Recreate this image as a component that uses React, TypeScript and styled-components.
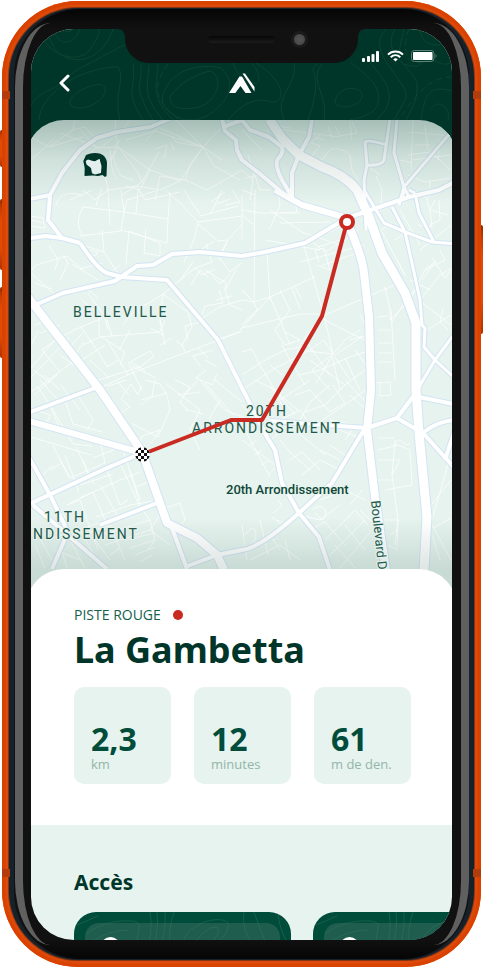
import React from "react";
import styled, { createGlobalStyle } from "styled-components";

const color = {
  forest: "#003629",
  pine: "#004d3b",
  panel: "#205e4f",
  mint: "#e6f3ee",
  red: "#c92a22",
  sage: "#94b5aa",
};

const GlobalStyle = createGlobalStyle`
  *, *::before, *::after { box-sizing: border-box; }
  body {
    margin: 0;
    background: #fff;
    font-family: "Noto Sans", "Open Sans", sans-serif;
    color: ${color.forest};
  }
  h1, h2, p, dl, dd, dt, ul { margin: 0; padding: 0; }
`;

/* ---------- device ---------- */

const Stage = styled.div`
  display: flex;
  height: 100vh;
  min-height: 600px;
  padding: 1px 3px 1px 2px;
  isolation: isolate;
`;

const Phone = styled.div`
  position: relative;
  flex: 1;
  min-width: 0;
  display: flex;
  padding: 7px;
  border-radius: 76px;
  background: #e2500f;
  box-shadow: inset 0 0 2px 4px #da4200;
`;

const SideKey = styled.span<{ $side: "left" | "right"; $top: number; $size: number }>`
  position: absolute;
  z-index: -1;
  ${(p) => p.$side}: -2px;
  top: ${(p) => p.$top}px;
  width: 6px;
  height: ${(p) => p.$size}px;
  border-radius: 2px;
  background: linear-gradient(#8c2c00, #c43c02 12%, #e04a06 30%, #e04a06 70%, #a83402);
`;

const AntennaBand = styled.span<{ $side: "left" | "right"; $edge: "top" | "bottom" }>`
  position: absolute;
  ${(p) => p.$side}: 0;
  ${(p) => p.$edge}: 90px;
  width: 8px;
  height: 8px;
  background: #b33c0c;
`;

const Rim = styled.div`
  flex: 1;
  min-width: 0;
  display: flex;
  padding: 1px 5px;
  border-radius: 69px;
  background: #16222b;
  box-shadow: 0 0 1px 1px rgba(60, 30, 20, 0.6);
`;

const Bezel = styled.div`
  position: relative;
  flex: 1;
  min-width: 0;
  display: flex;
  padding: 20px 17px 19px;
  border-radius: 66px;
  background: linear-gradient(#050505, #111 20px, #111 calc(100% - 20px), #050505);

  &::before {
    content: "";
    position: absolute;
    inset: 14px 0 14px 1px;
    border: 0 solid #606060;
    border-width: 0 8px;
    border-radius: 36px / 64px;
  }
`;

const Screen = styled.div`
  position: relative;
  flex: 1;
  min-width: 0;
  overflow: hidden;
  border-radius: 43px;
  background: ${color.mint};
  isolation: isolate;
`;

const NotchArea = styled.div`
  position: absolute;
  z-index: 3;
  inset: 0 0 auto;
  display: flex;
  justify-content: center;
`;

const Notch = styled.div`
  position: relative;
  width: 233px;
  height: 34px;
  border-radius: 0 0 24px 24px;
  background: #111;

  &::before,
  &::after {
    content: "";
    position: absolute;
    top: 0;
    width: 6px;
    height: 6px;
  }
  &::before {
    right: 100%;
    background: radial-gradient(circle at 0 100%, transparent 5px, #111 6px);
  }
  &::after {
    left: 100%;
    background: radial-gradient(circle at 100% 100%, transparent 5px, #111 6px);
  }
`;

const Speaker = styled.span`
  position: absolute;
  left: 83px;
  top: 7px;
  width: 67px;
  height: 7px;
  border-radius: 4px;
  background: linear-gradient(#060606, #1c1c1c);
`;

const Camera = styled.span`
  position: absolute;
  left: 166px;
  top: 2px;
  width: 17px;
  height: 17px;
  border: 3px solid #1b1b1b;
  border-radius: 50%;
  background: radial-gradient(circle, #555, #444);
`;

/* ---------- header ---------- */

const Header = styled.header`
  position: relative;
  height: 131px;
  margin-bottom: -40px;
  background: ${color.forest};
`;

const Contours = styled.svg`
  position: absolute;
  inset: 0;
  width: 100%;
  height: 100%;
  fill: none;
  stroke: #0d4434;
  stroke-width: 1;
`;

const StatusBar = styled.div`
  position: relative;
  display: flex;
  justify-content: flex-end;
  align-items: center;
  gap: 7px;
  height: 40px;
  padding: 14px 14px 0 0;
`;

const NavBar = styled.nav`
  position: relative;
  display: grid;
  grid-template-columns: 1fr auto 1fr;
  align-items: center;
  height: 28px;
  padding: 0 24px;
`;

const BackButton = styled.button`
  justify-self: start;
  display: flex;
  padding: 4px;
  border: 0;
  background: none;
  color: #fff;
`;

/* ---------- map ---------- */

const MapPanel = styled.section`
  position: relative;
  height: 490px;
  margin: 0 -5px -41px;
  border-radius: 38px 38px 0 0;
  overflow: hidden;
  background: ${color.mint};
`;

const MapDrawing = styled.svg`
  display: block;
  width: 100%;
  height: 100%;
`;

const MapShade = styled.div`
  position: absolute;
  inset: 0;
  background:
    linear-gradient(rgba(0, 54, 41, 0.28), rgba(0, 54, 41, 0.1) 38px, rgba(0, 54, 41, 0) 84px),
    linear-gradient(to top, rgba(0, 54, 41, 0.13) 41px, rgba(0, 54, 41, 0) 92px);
`;

const MapOverlay = styled(MapDrawing)`
  position: absolute;
  inset: 0;
`;

/* ---------- details ---------- */

const Summary = styled.section`
  position: relative;
  height: 256px;
  margin: 0 -5px;
  padding: 34px 46px 0 48px;
  border-radius: 38px 38px 0 0;
  background: #fff;
`;

const Grade = styled.p`
  display: flex;
  align-items: center;
  gap: 12px;
  font-family: "Open Sans", "Noto Sans", sans-serif;
  font-size: 14px;
  line-height: 24px;
  color: #16614c;

  &::after {
    content: "";
    width: 10px;
    height: 10px;
    border-radius: 50%;
    background: ${color.red};
  }
`;

const Title = styled.h1`
  font-size: 36px;
  line-height: 46px;
  font-weight: 700;
`;

const Stats = styled.dl`
  display: grid;
  grid-template-columns: repeat(3, 1fr);
  gap: 23px;
  margin-top: 14px;
`;

const Stat = styled.div`
  display: flex;
  flex-direction: column-reverse;
  height: 97px;
  padding: 0 0 11px 17px;
  border-radius: 10px;
  background: ${color.mint};
`;

const StatValue = styled.dd`
  font-size: 32px;
  line-height: 32px;
  font-weight: 700;
  color: ${color.pine};
`;

const StatUnit = styled.dt`
  font-family: "Open Sans", "Noto Sans", sans-serif;
  font-size: 13px;
  line-height: 18px;
  white-space: nowrap;
  color: ${color.sage};
`;

const Access = styled.section`
  padding: 43px 0 0 43px;
`;

const SectionTitle = styled.h2`
  font-size: 21px;
  line-height: 28px;
  font-weight: 700;
`;

const AccessList = styled.ul`
  display: flex;
  gap: 22px;
  margin-top: 16px;
  list-style: none;
`;

const AccessCard = styled.li`
  position: relative;
  flex: 0 0 217px;
  height: 120px;
  padding: 11px;
  overflow: hidden;
  border-radius: 22px;
  background: ${color.pine};
`;

const AccessInner = styled.div`
  height: 98px;
  padding: 14px 16px;
  border-radius: 14px;
  background: ${color.panel};
`;

const AccessBadge = styled.span`
  display: block;
  width: 19px;
  height: 19px;
  border-radius: 50%;
  background: #fff;
`;

const CardContours = styled(Contours)`
  stroke: #3b7767;
  opacity: 0.4;
`;

/* ---------- map data ---------- */

const streets = `
M31 137L49 147L73 130L75 120M49 147L83 137M31 160L54 139M60 133L100 148L120 133L130 120M115 120L118 148L104 170L108 190
M72 130L85 127L93 136M84 158L96 148L118 147L150 170L180 181L203 147M118 147L138 172L142 182L159 152M142 182L122 195
M110 150C112 160 110 170 117 180M120 140C112 150 111 160 121 176L133 180M150 170L140 190L126 186
M80 130L96 147M126 140L155 131L203 147L222 160M145 141L165 120M160 128L203 147L220 129M176 120L203 147L176 142L172 137M155 149L167 145L164 158M174 150L171 142
M203 147L190 165L185 180L207 190M203 147L214 166L240 180M185 180L160 176L155 200M207 190L242 170L253 180
M83 190L95 200L108 190L137 186L160 190L180 181M108 190L110 225M137 186L145 200L180 192M56 205C58 195 70 190 83 196
M70 200L92 190M83 207L124 212L121 231L80 236M83 207C76 220 78 229 83 236M124 212L168 219L167 243L121 230M121 190L124 212M124 212L127 200L155 191M168 219L170 192
M96 205L102 188M138 190L136 214M102 230L104 252L121 278M104 252L83 245M129 231L126 265M129 231L160 243L160 256L144 253L146 229M109 274L120 265
M198 222L242 216M198 222L195 237L184 262M198 222L180 203L165 190M184 190L192 203L200 214M211 213L222 190M200 216L238 206M198 224L218 241L228 240L242 224M228 240L220 254M214 241L198 252
M211 202L225 192M217 204L230 199M225 205L240 202L232 190
M31 271L36 265L67 256L83 270M49 245L58 260L55 270M60 280L68 263L63 255M31 273L53 293M72 264L98 280M31 216L43 218L45 228L31 226M31 220L44 223M80 269L102 263
M35 283L52 289M90 250L98 252L95 256L88 252M163 294L195 268L212 262L206 243M195 268L202 275L215 269M163 294L147 304L135 310L123 325M163 294L160 320L165 345
M163 294L188 312L192 327L182 345L186 353M201 322L185 326L188 340M217 340L242 331M200 320L219 307L242 300M205 270L226 283L225 290M180 280L193 262M191 285L200 270L208 277
M220 258L230 272L242 263M219 260L227 242M212 276L220 284L230 275M205 306L223 303L219 290M205 306L200 320M216 300L232 296M236 270L225 290L230 305L242 310
M88 293L105 317L108 330M105 317L81 327L99 353L107 367L118 360M82 300L92 309M85 287L99 299M99 313L99 335L125 352L120 365M83 326L58 338L42 350L60 372
M83 345L100 337L160 332L165 320M112 336L107 320M75 355L84 342M67 350L83 333M77 363L105 345M40 333L60 325M35 325L52 319M90 360L109 378M128 375L107 340
M31 345L39 330M31 368L55 340M31 377L69 338M38 388L78 358M44 375L60 390M34 370L50 383M61 340L76 356M34 395L57 375M60 355L75 366
M95 381L140 367L154 356L150 351L130 362L145 370M128 362L142 390M119 350L130 330M132 366L156 378M100 388L132 373L242 331M182 345L176 341M201 367L193 356L213 350M206 370L196 378L212 385L217 374M205 360L217 367M198 348L208 358M160 320L163 335L150 328M160 345L172 338
M31 437L91 455M65 400L73 424L102 432M50 405L73 444L92 446M31 392L38 387L50 405L61 432M77 394L93 420L87 430M40 380L58 400L75 393M61 385L80 410M44 430L50 415L36 410
M117 381L129 395M127 380L108 386M121 399L131 384L138 395L142 385M114 400L108 410M120 413L130 407L121 399M131 423L158 437L170 410L167 395L160 384L145 380M150 444L160 430L142 436L139 444
M165 383L200 410L190 430L200 450M175 380L190 387L180 402L188 411M183 397L198 380M200 380L225 410L250 420M205 383L233 415M215 380L242 402M203 414L185 409M220 400L209 419M141 400L167 393M155 380L152 396L141 405M178 395L200 392
M60 460L70 478M53 446L70 478M70 478L105 463L100 440M79 492L65 455M94 484L76 447M52 498L67 520M67 505L80 500L98 550M100 485L120 520M70 503L93 492L107 525M80 498L120 480L140 472M107 470L120 505L128 500M121 465L139 505L150 520
M130 470L140 500M80 485L113 474M93 458L108 452L122 447M83 460L88 475M122 447L135 487L157 479L145 458M135 487L140 505M96 517L130 505L160 500M50 470L62 463M43 475L53 465M100 440L125 450
M35 530L52 560M45 540L80 530L100 522M80 530L98 562M85 540L150 520L155 540L148 550M90 532L110 525L125 560M105 545L150 530M125 540L155 533M130 548L155 540M135 555L155 547M140 562L152 555M110 555L120 548M160 510L180 503L185 520L175 530L168 522M160 515L150 530L170 545M55 550L80 560M60 545L67 568M70 540L85 568M35 545L45 568M95 540L110 560
M242 240L242 195M255 190L254 300M267 250L270 300M242 300L254 302L270 297L315 277M254 302L242 290M254 302L257 310L242 325M270 297L280 320L290 345M270 297L240 330M254 225L242 215M242 210L260 213L300 213M269 230L280 205L278 190M280 223L330 222M281 213L297 212L293 190M265 240L320 250M304 246L325 320M270 210L302 232L340 245M319 262L315 250L324 248L330 270L317 265M318 247L340 240M347 222L330 232L318 232M310 240L325 252L345 240L358 230M300 262L365 245M323 265L360 252
M242 328L300 314L322 314M292 288L300 309M295 287L302 300M280 290L290 310L275 330L285 345L300 340L285 332M242 352L252 349L260 365L275 390M322 314L300 345L290 375M322 314L305 340L330 375M325 320L333 354L324 340L310 350M325 320L350 333L365 340M320 317L395 285L405 281M385 287L390 310L390 320L410 300L425 270L435 262M392 322L405 302L418 285M391 310L395 380M378 317L388 316M378 330L390 330M378 343L391 343M378 353L392 353M378 362L392 362
M242 375L265 360L285 350L310 345M245 388L272 370L310 350M282 345L290 360L305 385M299 350L333 354L345 340L360 330M270 365L282 375M333 354L350 380M333 354L312 370L330 390M335 355L362 337M315 385L332 356L340 390M300 375L320 370L350 357L365 352M310 360L345 385L365 370M360 315L368 330M350 340L368 335M355 350L368 368M345 358L360 390
M400 210L420 245M382 232L405 275L397 260M392 222L375 235M395 240L410 230M418 225L432 227L430 210L435 200M425 195L430 210L448 215M439 200L440 220L430 225M420 250L451 225M422 303L451 325M420 300L440 275L451 268M432 257L445 278L451 270M435 262L422 280M425 270L445 260L440 250M422 333L440 322L451 315M440 322L443 308M440 322L448 330M410 280L430 290
M242 405L260 425M255 380L275 390L295 415M270 385L285 410M285 380L280 395L298 410M295 395L310 390L330 412L345 403L333 385M300 420L310 402L330 385M305 412L325 405L345 385M315 425L345 405L365 390M280 400L310 380M260 430L300 410L310 425M270 440L290 425M330 420L355 425L345 440M350 395L366 410M375 383L390 382L391 395L378 396M380 396L380 382M345 380L366 402M340 430L365 440
M242 440L275 465M245 430L270 477M250 445L257 440M255 455L262 450M262 465L269 460M268 475L275 468M280 440L290 452L310 470M290 460L302 452L320 470M295 430L325 455M302 475L320 460L340 470M320 450L340 460M330 445L345 455
M378 450L398 445L410 450L412 485L385 490M378 438L395 438M378 460L400 460L392 475M395 440L392 475L398 520L395 545M395 445C400 432 405 450 410 443M378 480L392 480M385 520L398 520L397 550L388 545M390 535L397 530M425 513L451 480M431 523L445 475L451 450M433 528L451 518M431 523L451 560M425 513L440 560
M273 513L282 505L278 500M277 520L290 525M272 517L283 526L275 530M312 510C325 500 330 515 322 520L315 513M300 515L320 520L340 505M310 530L325 522L345 545M325 540L355 510L368 525M330 555L365 520M340 568L372 530M320 500L345 490L365 500M345 525L365 550M335 545L355 568M360 510L380 530M362 490L350 505M242 525L247 560M245 535C255 520 260 535 252 545M260 520L268 555M250 560L280 545L300 560M285 540L290 560M268 532L280 550
M242 130L262 150M270 128L340 137M335 126L340 136L357 133L352 122M270 125L290 128M315 138L325 140M312 143L320 146L310 158M325 157C330 143 345 150 350 155L352 170L358 180M325 157L315 165M300 152L320 135M328 126L332 138M350 122L352 140
M408 132L451 136M413 120L411 170M408 155L430 152L440 160M412 160L450 155M425 125L428 150M430 150L450 170M415 145L430 145M440 140L438 160M408 175L425 182L450 178M430 180L428 200M400 160L412 163
M242 190L255 195M248 155L260 190L270 190M245 178L260 175M255 165L250 200M376 176L382 190L380 215M366 165L380 175`;

const roads = [
  { w: 4, d: "M25 200L50 195L62 173L80 150L97 138L117 132L150 127L170 119M50 196L48 220L62 238M25 239L45 236L62 238L80 243M31 308L35 305L63 293L115 281L137 266L153 265L172 254L200 252L242 256L265 252L305 243L347 218L409 197L439 190L458 180" },
  { w: 4, d: "M80 243Q98 270 107 273L122 277L167 280L218 340L242 388L267 437L275 450L282 483L299 513L319 537L330 570" },
  { w: 4, d: "M222 119L225 131L236 140L237 150L242 160L259 173L285 195M223 127L242 120L250 130L269 137L282 147Q284 152 278 159Q274 164 282 180L292 197M312 119L309 137L299 155L292 173L292 197" },
  { w: 3, d: "M390 119L384 160Q382 166 367 165M366 230L364 180L367 165L365 142Q367 139 387 145M397 119L394 153L404 187L399 205M404 187L458 124M404 187L409 197M404 190L402 200" },
  { w: 3, d: "M364 190L384 223L405 232L432 242L458 244M392 207L405 232L412 263L420 300L422 325L425 328L424 347L435 360L458 381M415 193L419 213L434 242M409 190L415 193M458 329L435 360L419 387" },
  { w: 4, d: "M25 414L95 388M25 506L107 468L142 453M25 450L50 495L68 532L52 569M33 505L107 569M100 525L157 503M172 528L187 569M185 567L217 555L242 550Q260 548 299 513L332 483L365 428" },
  { w: 4, d: "M270 421L367 428L397 418L424 434L458 472M397 418L418 390M419 397L458 405M424 432Q440 420 458 420M458 420L445 460" },
  { w: 6, d: "M25 420L142 453M275 190L302 205L347 218" },
  { w: 8, d: "M25 293L47 322L100 390L142 452L167 523L197 538L217 555L224 570M347 222Q362 255 364 273L369 317L371 390L367 430L375 497L386 570" },
  { w: 9, d: "M269 119L282 138L299 155L322 167Q345 175 357 190L369 217L382 253L405 293L416 323L416 390L419 433L427 517L424 570" },
];

const routePath = "M143 454L231 420L262 420L322 316L347 222";

const PlaceLabel = styled.text`
  font-family: Roboto, "Noto Sans", sans-serif;
  font-size: 14px;
  letter-spacing: 2px;
  fill: #23584a;
  stroke: ${color.mint};
  stroke-width: 2px;
  paint-order: stroke;
`;

const DistrictLabel = styled(PlaceLabel)`
  font-size: 13px;
  font-weight: 500;
  letter-spacing: 0;
  fill: #0f4838;
`;

const RoadLabel = styled(PlaceLabel)`
  font-size: 13px;
  letter-spacing: 0;
`;

const checks = [0, 1, 2, 3, 4].flatMap((r) =>
  [0, 1, 2, 3, 4].filter((c) => (r + c) % 2 === 1).map((c) => ({ x: 135 + c * 3, y: 447 + r * 3 }))
);

function TrailMap() {
  return (
    <MapPanel aria-label="Plan de la piste">
      <MapDrawing viewBox="26 120 431 490" preserveAspectRatio="xMidYMin slice" aria-hidden="true">
        <g fill="none" strokeLinejoin="round">
          <path d={streets} stroke="#fff" strokeWidth="1" opacity="0.75" />
          {roads.map((r) => (
            <path key={r.d} d={r.d} stroke="#d3e4f3" strokeWidth={r.w + 2} />
          ))}
          {roads.map((r) => (
            <path key={r.d} d={r.d} stroke="#fff" strokeWidth={r.w} />
          ))}
        </g>
      </MapDrawing>
      <MapShade />
      <MapOverlay viewBox="26 120 431 490" preserveAspectRatio="xMidYMin slice">
        <PlaceLabel x="73" y="317">BELLEVILLE</PlaceLabel>
        <PlaceLabel x="246" y="416">20TH</PlaceLabel>
        <PlaceLabel x="192" y="433">ARRONDISSEMENT</PlaceLabel>
        <PlaceLabel x="44" y="522">11TH</PlaceLabel>
        <PlaceLabel x="33" y="539">NDISSEMENT</PlaceLabel>
        <DistrictLabel x="226" y="494">20th Arrondissement</DistrictLabel>
        <RoadLabel transform="translate(371 501) rotate(84)">Boulevard Davout</RoadLabel>
        <path d={routePath} fill="none" stroke={color.red} strokeWidth="4" strokeLinejoin="round" />
        <circle cx="347" cy="222" r="6" fill="#fff" stroke={color.red} strokeWidth="4" />
        <clipPath id="finish"><circle cx="142.500" cy="454.500" r="7.300" /></clipPath>
        <g clipPath="url(#finish)">
          <rect x="134" y="446" width="17" height="17" fill="#fff" />
          {checks.map((c) => (
            <rect key={`${c.x}-${c.y}`} x={c.x} y={c.y} width="3" height="3" fill="#111" />
          ))}
        </g>
        <path
          fill={color.forest}
          d="M83.300 161L86 155Q90 153 95 153Q101 153 104 156Q107 159 107 164L106.500 176L105 177L102.500 175L98 176L93 175.500L84.500 176L84.700 168Z"
        />
        <path
          fill="#e3efec"
          d="M85.700 161L88 159.500L93 161L95 161.200L99.500 158.700L101.500 166L101 173L95 174.500L92 173.300L91 168L86.500 164.500Z"
        />
      </MapOverlay>
    </MapPanel>
  );
}

const headerContours =
  "M9 0C13 25 45 36 58 22Q70 5 68 0M23 0C25 17 43 18 49 0M33 0Q36 6 42 0M17 3C25 42 70 39 82 0" +
  "M0 76C15 56 17 68 43 43C55 36 72 27 95 15M8 91C8 75 29 52 58 43Q78 37 87 38C95 48 82 66 89 91" +
  "M40 77C33 66 63 53 71 56C84 64 56 86 40 77M102 35C106 60 92 60 112 91M110 35C112 58 100 54 122 91M118 36C116 60 112 67 132 91M127 35C126 55 119 71 143 91" +
  "M139 68C147 54 169 43 180 42C197 53 180 79 162 79Q139 82 139 68M132 66C139 40 170 34 190 39C209 56 194 76 174 88Q154 97 137 82Q129 74 132 66" +
  "M202 35C225 20 236 60 221 54Q208 49 202 35M225 34C258 55 253 75 240 73Q219 65 197 91M253 91C242 66 268 55 263 34M277 91C295 40 274 43 286 35" +
  "M291 35C277 52 298 66 293 91M304 73C308 53 334 58 331 68C328 79 306 81 304 73" +
  "M319 33C337 46 351 59 347 73C346 84 331 89 319 91M333 25C350 49 365 59 355 80L346 91M355 0C332 24 379 52 375 69C370 79 365 87 363 91" +
  "M364 0C348 26 385 39 386 56Q388 69 375 91M389 0C390 17 405 18 416 14M407 0Q410 11 420 3" +
  "M390 91C394 60 402 57 421 62M400 80C407 68 421 80 417 91M373 0C369 22 359 38 387 37C403 21 410 43 421 32";
const dashedContours = "M137 35C119 60 125 72 149 91M378 0C370 20 374 45 404 28M421 48C390 47 375 86 366 91";

const cardContours =
  "M13 22C27 7 70 5 65 15L62 36M17 30Q35 18 55 18M3 13L24 4M76 0Q79 17 74 36M83 0Q85 18 79 36M91 0Q92 16 87 36M100 0Q94 17 96 36M110 28C114 12 146 2 154 11C156 24 142 31 130 36M122 29Q133 14 143 15Q149 22 133 33M170 0Q167 16 180 36M180 0Q187 20 194 36M204 0Q205 16 213 30";

const stats = [
  { value: "2,3", unit: "km" },
  { value: "12", unit: "minutes" },
  { value: "61", unit: "m de den." },
];

export default function App() {
  return (
    <>
      <GlobalStyle />
      <Stage>
        <Phone>
          <SideKey $side="left" $top={129} $size={37} />
          <SideKey $side="left" $top={198} $size={71} />
          <SideKey $side="left" $top={286} $size={71} />
          <SideKey $side="right" $top={224} $size={109} />
          <AntennaBand $side="left" $edge="top" />
          <AntennaBand $side="right" $edge="top" />
          <AntennaBand $side="left" $edge="bottom" />
          <AntennaBand $side="right" $edge="bottom" />
          <Rim>
            <Bezel>
              <Screen>
                <NotchArea>
                  <Notch>
                    <Speaker />
                    <Camera />
                  </Notch>
                </NotchArea>

                <Header>
                  <Contours viewBox="0 0 421 131" preserveAspectRatio="xMidYMin slice" aria-hidden="true">
                    <path d={headerContours} />
                    <path d={dashedContours} strokeDasharray="6 4" />
                  </Contours>
                  <StatusBar>
                    <svg width="18" height="11" viewBox="0 0 18 11" fill="#fff" aria-hidden="true">
                      <rect x="0" y="7" width="3" height="4" rx="1" />
                      <rect x="5" y="5" width="3" height="6" rx="1" />
                      <rect x="9.500" y="3" width="3" height="8" rx="1" />
                      <rect x="14" y="0" width="3" height="11" rx="1" />
                    </svg>
                    <svg width="17" height="12" viewBox="0 0 17 12" fill="none" stroke="#fff" strokeWidth="2" aria-hidden="true">
                      <path d="M1 4.600C5 .400 12 .400 16 4.600M3.700 7.300C6.500 4.600 10.500 4.600 13.300 7.300" />
                      <path d="M8.500 11.500L6.200 9.200Q8.500 7.400 10.800 9.200Z" fill="#fff" stroke="none" />
                    </svg>
                    <svg width="27" height="12" viewBox="0 0 27 12" aria-hidden="true">
                      <rect x=".500" y=".500" width="22.500" height="11" rx="3" fill="none" stroke="#5c8277" />
                      <rect x="2" y="2" width="19.500" height="8" rx="1" fill="#fff" />
                      <path d="M24.500 4Q26.500 6 24.500 8Z" fill="#5c8277" />
                    </svg>
                  </StatusBar>
                  <NavBar>
                    <BackButton type="button" aria-label="Retour">
                      <svg width="14" height="18" viewBox="0 0 14 18" fill="none" stroke="currentColor" strokeWidth="3" aria-hidden="true">
                        <path d="M9 2L2 9L9 16" strokeLinecap="round" strokeLinejoin="round" />
                      </svg>
                    </BackButton>
                    <svg width="26" height="21" viewBox="0 0 26 21" fill="#fff" role="img" aria-label="Accueil">
                      <path d="M0 20L10.500 3.500L13 3.500L22.500 20L16.500 20L11.500 13L6.300 20Z" />
                      <path d="M13.500 .500L16 .500L25.500 14V18.500Z" />
                    </svg>
                  </NavBar>
                </Header>

                <TrailMap />

                <Summary>
                  <Grade>PISTE ROUGE</Grade>
                  <Title>La Gambetta</Title>
                  <Stats>
                    {stats.map((s) => (
                      <Stat key={s.unit}>
                        <StatUnit>{s.unit}</StatUnit>
                        <StatValue>{s.value}</StatValue>
                      </Stat>
                    ))}
                  </Stats>
                </Summary>

                <Access>
                  <SectionTitle>Accès</SectionTitle>
                  <AccessList>
                    {["depart", "arrivee"].map((id) => (
                      <AccessCard key={id}>
                        <AccessInner>
                          <AccessBadge />
                        </AccessInner>
                        <CardContours viewBox="0 0 217 120" aria-hidden="true">
                          <path d={cardContours} />
                        </CardContours>
                      </AccessCard>
                    ))}
                  </AccessList>
                </Access>
              </Screen>
            </Bezel>
          </Rim>
        </Phone>
      </Stage>
    </>
  );
}
